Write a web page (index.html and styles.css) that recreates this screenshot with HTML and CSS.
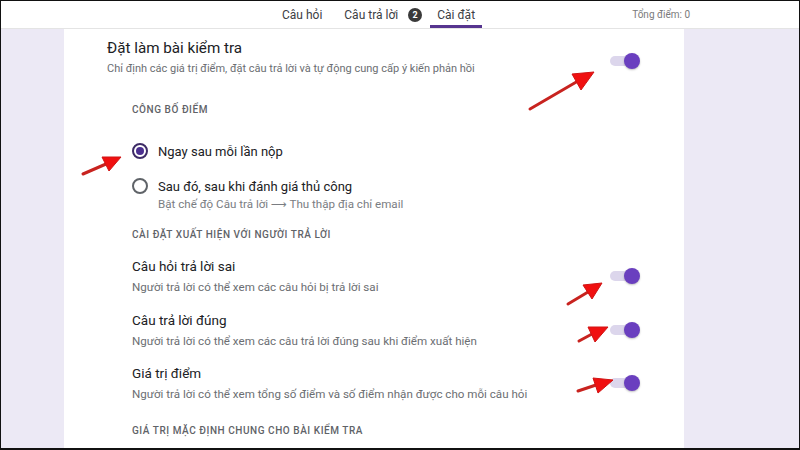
FILE: index.html
```html
<!DOCTYPE html>
<html lang="vi">
<head>
<meta charset="utf-8">
<title>Cài đặt</title>
<link rel="stylesheet" href="styles.css">
</head>
<body>
<div class="frame">
  <header class="topbar">
    <nav class="tabs">
      <span class="tab">Câu hỏi</span>
      <span class="tab tab-count">Câu trả lời <span class="badge">2</span></span>
      <span class="tab active">Cài đặt</span>
    </nav>
    <span class="total">Tổng điểm: 0</span>
  </header>
  <main class="main">
    <section class="card">
      <div class="row row-top">
        <div class="row-text">
          <div class="row-title">Đặt làm bài kiểm tra</div>
          <div class="row-sub">Chỉ định các giá trị điểm, đặt câu trả lời và tự động cung cấp ý kiến phản hồi</div>
        </div>
        <span class="toggle toggle-low"><span class="track"></span><span class="thumb"></span></span>
      </div>
      <div class="section">
        <div class="label label-publish">CÔNG BỐ ĐIỂM</div>
        <div class="radio-row radio-first"><span class="radio checked"></span><span class="radio-text">Ngay sau mỗi lần nộp</span></div>
        <div class="radio-row radio-second"><span class="radio"></span><span class="radio-text">Sau đó, sau khi đánh giá thủ công</span></div>
        <div class="radio-sub">Bật chế độ Câu trả lời <span class="long-arrow">⟶</span> Thu thập địa chỉ email</div>
        <div class="label label-view">CÀI ĐẶT XUẤT HIỆN VỚI NGƯỜI TRẢ LỜI</div>
        <div class="row row-a">
          <div class="row-text">
            <div class="row-title">Câu hỏi trả lời sai</div>
            <div class="row-sub">Người trả lời có thể xem các câu hỏi bị trả lời sai</div>
          </div>
          <span class="toggle"><span class="track"></span><span class="thumb"></span></span>
        </div>
        <div class="row row-b">
          <div class="row-text">
            <div class="row-title">Câu trả lời đúng</div>
            <div class="row-sub">Người trả lời có thể xem các câu trả lời đúng sau khi điểm xuất hiện</div>
          </div>
          <span class="toggle"><span class="track"></span><span class="thumb"></span></span>
        </div>
        <div class="row row-c">
          <div class="row-text">
            <div class="row-title">Giá trị điểm</div>
            <div class="row-sub">Người trả lời có thể xem tổng số điểm và số điểm nhận được cho mỗi câu hỏi</div>
          </div>
          <span class="toggle"><span class="track"></span><span class="thumb"></span></span>
        </div>
        <div class="label label-default">GIÁ TRỊ MẶC ĐỊNH CHUNG CHO BÀI KIỂM TRA</div>
      </div>
    </section>
    <aside class="side"></aside>
  </main>
  <svg class="arrows" width="800" height="450" viewBox="0 0 800 450" aria-hidden="true">
    <g class="shaft">
      <line x1="530" y1="109" x2="578" y2="81"/>
      <line x1="83" y1="174" x2="106" y2="164"/>
      <line x1="568" y1="304" x2="588" y2="292"/>
      <line x1="579" y1="341" x2="592" y2="334"/>
      <line x1="578" y1="391" x2="596" y2="385"/>
    </g>
    <g class="head">
      <polygon points="594,72 572,74 581,90"/>
      <polygon points="121,157 102,157 109,171"/>
      <polygon points="602,283 583,285 592,299"/>
      <polygon points="608,327 588,327 595,342"/>
      <polygon points="613,380 593,378 598,393"/>
    </g>
  </svg>
</div>
</body>
</html>
```

FILE: styles.css
```css
* { box-sizing: border-box; }

html, body {
  margin: 0;
  padding: 0;
  background: #ffffff;
}

body {
  font-family: Roboto, "Noto Sans", "Liberation Sans", sans-serif;
  color: #202124;
}

.frame {
  position: relative;
  width: 800px;
  height: 450px;
  border: 1px solid #111111;
  border-bottom-width: 2px;
  overflow: hidden;
  display: flex;
  flex-direction: column;
}

/* ---------- top bar ---------- */
.topbar {
  height: 28px;
  flex: none;
  display: flex;
  align-items: stretch;
  border-bottom: 1px solid #e4e4e4;
  background: #ffffff;
}

.tabs {
  display: flex;
  align-items: stretch;
  margin-left: 274px;
}

.tab {
  display: flex;
  align-items: center;
  padding: 0 7px;
  margin-right: 8px;
  font-size: 12px;
  color: #3c4043;
  border-bottom: 3px solid transparent;
  padding-top: 3px;
}

.tab-count { margin-right: 1px; }

.tab.active {
  border-bottom-color: #56348f;
}

.badge {
  display: inline-flex;
  align-items: center;
  justify-content: center;
  width: 14px;
  height: 14px;
  margin-left: 10px;
  border-radius: 50%;
  background: #3a3a3a;
  color: #ffffff;
  font-size: 9px;
  font-weight: 700;
}

.total {
  margin-left: auto;
  margin-right: 109px;
  align-self: center;
  font-size: 10px;
  color: #7a7a7a;
}

/* ---------- main ---------- */
.main {
  flex: 1;
  display: flex;
  background: #ece9f5;
  padding-left: 63px;
}

.card {
  width: 620px;
  flex: none;
  background: #ffffff;
  padding: 9px 44px 0 43px;
}

.side { flex: 1; }

.row {
  display: flex;
  align-items: center;
  justify-content: space-between;
}

.row-title {
  font-size: 13.5px;
  line-height: 20px;
  color: #202124;
}

.row-sub {
  margin-top: 2px;
  font-size: 11.6px;
  line-height: 18px;
  color: #6b6e72;
}

.row-top .row-title {
  font-size: 15.2px;
}

.row-top .row-sub {
  font-size: 11px;
}

.section {
  padding-left: 25px;
}

.label {
  font-size: 10px;
  line-height: 16px;
  font-weight: 500;
  letter-spacing: 0.55px;
  color: #5f6368;
}

.label-publish { margin-top: 24px; }
.label-view { margin-top: 14px; }
.label-default { margin-top: 20px; }

.radio-row {
  display: flex;
  align-items: center;
  gap: 10px;
  height: 20px;
}

.radio-first { margin-top: 23px; }
.radio-second { margin-top: 15px; }

.radio {
  width: 16px;
  height: 16px;
  flex: none;
  border: 2px solid #5f6368;
  border-radius: 50%;
  display: flex;
  align-items: center;
  justify-content: center;
}

.radio.checked {
  border-color: #3d2b66;
}

.radio.checked::after {
  content: "";
  width: 8px;
  height: 8px;
  border-radius: 50%;
  background: #4b2f8f;
}

.radio-text {
  font-size: 13px;
  color: #202124;
}

.radio-sub {
  padding-left: 26px;
  font-size: 11.6px;
  line-height: 16px;
  color: #7a7d82;
}

.long-arrow {
  font-family: "DejaVu Sans", sans-serif;
  font-size: 11px;
}

.row-a { margin-top: 13px; }
.row-b { margin-top: 14px; }
.row-c { margin-top: 13px; }

/* ---------- toggle ---------- */
.toggle {
  display: flex;
  align-items: center;
  flex: none;
  width: 30px;
  height: 16px;
}

.toggle-low { margin-top: 5px; }

.track {
  width: 26px;
  height: 10px;
  border-radius: 5px;
  background: #dcd6ec;
}

.thumb {
  width: 16px;
  height: 16px;
  margin-left: -12px;
  border-radius: 50%;
  background: #6a3fbf;
  box-shadow: 0 1px 2px rgba(0, 0, 0, 0.25);
}

/* ---------- annotation arrows ---------- */
.arrows {
  position: absolute;
  top: -1px;
  left: -1px;
  pointer-events: none;
}

.shaft line {
  stroke: #c8231f;
  stroke-width: 3;
  stroke-linecap: round;
}

.head polygon {
  fill: #f01010;
  stroke: #d01414;
  stroke-width: 1;
  stroke-linejoin: round;
}
```
